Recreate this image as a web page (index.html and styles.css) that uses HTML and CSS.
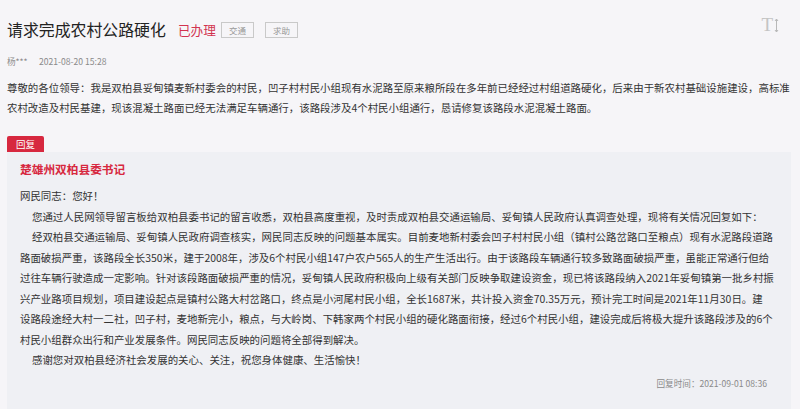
FILE: index.html
```html
<!DOCTYPE html>
<html lang="zh-CN">
<head>
<meta charset="utf-8">
<title>请求完成农村公路硬化</title>
<link rel="stylesheet" href="styles.css">
</head>
<body>
<div class="page">
  <div class="header">
    <h1 class="title">请求完成农村公路硬化</h1>
    <span class="status">已办理</span>
    <span class="tag">交通</span>
    <span class="tag">求助</span>
    <span class="font-tool"><span class="font-t">T</span><svg class="font-arrow" width="5" height="15" viewBox="0 0 5 15"><path d="M2.5 1 V14 M1 3 L2.5 1 L4 3 M1 12 L2.5 14 L4 12" fill="none" stroke="#b8b8b8" stroke-width="1"/></svg></span>
  </div>
  <div class="meta"><span class="author">杨***</span><span class="date">2021-08-20 15:28</span></div>
  <p class="question">尊敬的各位领导：我是双柏县妥甸镇麦新村委会的村民，凹子村村民小组现有水泥路至原来粮所段在多年前已经经过村组道路硬化，后来由于新农村基础设施建设，高标准<br>农村改造及村民基建，现该混凝土路面已经无法满足车辆通行，该路段涉及4个村民小组通行，恳请修复该路段水泥混凝土路面。</p>
  <div class="reply-tab">回复</div>
  <div class="reply">
    <div class="reply-org">楚雄州双柏县委书记</div>
    <div class="reply-body">
      <div class="line">网民同志：您好！</div>
      <div class="line indent">您通过人民网领导留言板给双柏县委书记的留言收悉，双柏县高度重视，及时责成双柏县交通运输局、妥甸镇人民政府认真调查处理，现将有关情况回复如下：</div>
      <div class="line indent">经双柏县交通运输局、妥甸镇人民政府调查核实，网民同志反映的问题基本属实。目前麦地新村委会凹子村村民小组（镇村公路岔路口至粮点）现有水泥路段道路</div>
      <div class="line">路面破损严重，该路段全长350米，建于2008年，涉及6个村民小组147户农户565人的生产生活出行。由于该路段车辆通行较多致路面破损严重，虽能正常通行但给</div>
      <div class="line">过往车辆行驶造成一定影响。针对该段路面破损严重的情况，妥甸镇人民政府积极向上级有关部门反映争取建设资金，现已将该路段纳入2021年妥甸镇第一批乡村振</div>
      <div class="line">兴产业路项目规划，项目建设起点是镇村公路大村岔路口，终点是小河尾村民小组，全长1687米，共计投入资金70.35万元，预计完工时间是2021年11月30日。建</div>
      <div class="line">设路段途经大村一二社，凹子村，麦地新完小，粮点，与大岭岗、下韩家两个村民小组的硬化路面衔接，经过6个村民小组，建设完成后将极大提升该路段涉及的6个</div>
      <div class="line">村民小组群众出行和产业发展条件。网民同志反映的问题将全部得到解决。</div>
      <div class="line indent">感谢您对双柏县经济社会发展的关心、关注，祝您身体健康、生活愉快！</div>
    </div>
    <div class="reply-time">回复时间：2021-09-01 08:36</div>
  </div>
</div>
</body>
</html>
```

FILE: styles.css
```css
html, body {
  margin: 0;
  padding: 0;
  background: #f6f5f8;
}
body {
  font-family: "Noto Sans CJK SC", "Noto Sans", sans-serif;
  color: #333;
}
.page {
  padding: 20px 9px 0 7px;
}
.header {
  display: flex;
  align-items: center;
  height: 20px;
}
.title {
  margin: 0;
  font-size: 15.9px;
  font-weight: normal;
  color: #222;
  line-height: 20px;
}
.status {
  margin-left: 12px;
  font-size: 12.7px;
  color: #d2334f;
  line-height: 20px;
}
.tag {
  margin-left: 5px;
  width: 31px;
  height: 14px;
  border: 1px solid #c9c9c9;
  color: #999;
  font-size: 8.5px;
  line-height: 14px;
  text-align: center;
}
.tag + .tag {
  margin-left: 11px;
}
.font-tool {
  margin-left: auto;
  margin-right: 12px;
  display: flex;
  align-items: center;
  align-self: flex-start;
  margin-top: -3px;
  height: 16px;
}
.font-t {
  font-family: "Liberation Serif", serif;
  font-size: 19px;
  color: #c4c4c4;
  line-height: 16px;
}
.font-arrow {
  margin-left: 1px;
}
.meta {
  margin-top: 15px;
  height: 12px;
  line-height: 12px;
  font-size: 8.6px;
  color: #8a8a8a;
  display: flex;
}
.author {
  width: 32px;
}
.question {
  margin: 11px 0 0 0;
  font-size: 10.45px;
  line-height: 20px;
  white-space: nowrap;
  color: #333;
}
.reply-tab {
  margin-top: 18px;
  width: 37px;
  height: 16px;
  background: #d7283f;
  color: #fff;
  font-size: 9.5px;
  line-height: 16px;
  text-align: center;
  border-radius: 2px 2px 0 0;
}
.reply {
  background: #eff0f4;
  padding: 7px 24px 21px 13px;
  width: 747px;
}
.reply-org {
  font-size: 11.7px;
  font-weight: bold;
  color: #d7283f;
  line-height: 20px;
}
.reply-body {
  margin-top: 7px;
  font-size: 10.45px;
  line-height: 20.5px;
  color: #333;
}
.line {
  white-space: nowrap;
}
.indent {
  padding-left: 12px;
}
.reply-time {
  margin-top: 5px;
  text-align: right;
  font-size: 8.6px;
  line-height: 14px;
  color: #8a8a8a;
}
```
